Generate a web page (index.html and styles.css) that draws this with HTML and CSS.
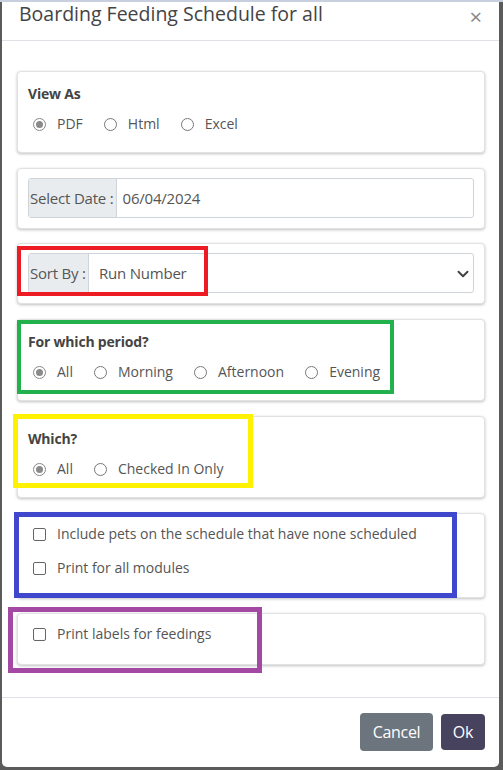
FILE: index.html
```html
<!DOCTYPE html>
<html>
<head>
<meta charset="utf-8">
<link rel="stylesheet" href="styles.css">
</head>
<body>
<div class="topband"></div>
<div class="modal">
  <div class="modal-header">
    <h5 class="title">Boarding Feeding Schedule for all</h5>
    <span class="close">&times;</span>
  </div>
  <div class="modal-body">
    <div class="card card-radio">
      <div class="group-label">View As</div>
      <div class="radio-row">
        <label class="opt"><span class="radio checked"></span>PDF</label>
        <label class="opt"><span class="radio"></span>Html</label>
        <label class="opt"><span class="radio"></span>Excel</label>
      </div>
    </div>
    <div class="card card-input">
      <div class="input-group">
        <span class="addon">Select Date :</span>
        <span class="field">06/04/2024</span>
      </div>
    </div>
    <div class="card card-input card-sort">
      <div class="input-group">
        <span class="addon">Sort By :</span>
        <span class="field select">Run Number
          <svg class="chev" width="12" height="8" viewBox="0 0 12 8"><path d="M1.5 1.8 L6 6.2 L10.5 1.8" fill="none" stroke="#444" stroke-width="2" stroke-linecap="round" stroke-linejoin="round"/></svg>
        </span>
      </div>
    </div>
    <div class="card card-radio">
      <div class="group-label">For which period?</div>
      <div class="radio-row">
        <label class="opt"><span class="radio checked"></span>All</label>
        <label class="opt"><span class="radio"></span>Morning</label>
        <label class="opt"><span class="radio"></span>Afternoon</label>
        <label class="opt"><span class="radio"></span>Evening</label>
      </div>
    </div>
    <div class="card card-radio">
      <div class="group-label">Which?</div>
      <div class="radio-row">
        <label class="opt"><span class="radio checked"></span>All</label>
        <label class="opt"><span class="radio"></span>Checked In Only</label>
      </div>
    </div>
    <div class="card card-checks">
      <label class="chk"><span class="box"></span>Include pets on the schedule that have none scheduled</label>
      <label class="chk"><span class="box"></span>Print for all modules</label>
    </div>
    <div class="card card-check1">
      <label class="chk"><span class="box"></span>Print labels for feedings</label>
    </div>
  </div>
  <div class="modal-footer">
    <button class="btn btn-cancel">Cancel</button>
    <button class="btn btn-ok">Ok</button>
  </div>

  <div class="mark mark-red"></div>
  <div class="mark mark-green"></div>
  <div class="mark mark-yellow"></div>
  <div class="mark mark-blue"></div>
  <div class="mark mark-purple"></div>
</div>
</body>
</html>
```

FILE: styles.css
```css
html, body {
  margin: 0;
  padding: 0;
}
body {
  background: #5b5b5b;
  width: 503px;
  height: 770px;
  overflow: hidden;
  font-family: "Open Sans", "Noto Sans", sans-serif;
  color: #555;
}
.topband {
  height: 2px;
  background: #c8d0df;
}
.modal {
  position: relative;
  margin-left: 2px;
  width: 497px;
  height: 765px;
  background: #fff;
  border-radius: 0 0 5px 5px;
  box-sizing: border-box;
}
.modal-header {
  height: 39px;
  box-sizing: border-box;
  border-bottom: 1px solid #dee2e6;
  display: flex;
  justify-content: space-between;
  align-items: flex-start;
  padding: 0 17px 0 17px;
}
.title {
  margin: 0;
  font-size: 19.5px;
  font-weight: 400;
  line-height: 23px;
  color: #444;
}
.close {
  font-size: 22px;
  line-height: 22px;
  color: #888;
  font-weight: 400;
  padding-top: 3px;
}
.modal-body {
  padding: 30px 14px 0 15px;
  display: flex;
  flex-direction: column;
  gap: 15px;
  height: 656px;
  box-sizing: border-box;
}
.card {
  border: 1px solid #e2e2e2;
  border-radius: 4px;
  box-shadow: 0 1px 3px rgba(0,0,0,0.25);
  background: #fff;
  box-sizing: border-box;
}
.card-sort {
  margin-top: -1px;
}
.card-radio {
  padding: 12px 10px 18px 10px;
}
.group-label {
  font-size: 14px;
  font-weight: 700;
  line-height: 20px;
  color: #444;
  letter-spacing: -0.2px;
}
.radio-row {
  display: flex;
  gap: 21px;
  margin-top: 10px;
  padding-left: 5px;
}
.opt, .chk {
  display: flex;
  align-items: center;
  font-size: 14px;
  line-height: 20px;
  color: #555;
}
.radio {
  width: 13px;
  height: 13px;
  border: 1px solid #777;
  border-radius: 50%;
  box-sizing: border-box;
  margin-right: 11px;
  position: relative;
  flex: none;
}
.radio.checked {
  border-color: #888;
}
.radio.checked::after {
  content: "";
  position: absolute;
  left: 2px;
  top: 2px;
  width: 7px;
  height: 7px;
  border-radius: 50%;
  background: #8a8a8a;
}
.card-input {
  padding: 9px 10px 10px 10px;
}
.input-group {
  display: flex;
  height: 40px;
  border: 1px solid #ced4da;
  border-radius: 3px;
  box-sizing: border-box;
  font-size: 15px;
  color: #555;
  letter-spacing: -0.2px;
}
.addon {
  display: flex;
  align-items: center;
  background: #e9ecef;
  border-right: 1px solid #ced4da;
  padding: 0 2px 0 1px;
}
.field {
  flex: 1;
  display: flex;
  align-items: center;
  padding-left: 6px;
}
.field.select {
  padding-left: 10px;
  justify-content: space-between;
  padding-right: 4px;
}
.chev {
  margin-top: 1px;
}
.card-checks {
  padding: 10px 10px 19px 15px;
  display: flex;
  flex-direction: column;
  gap: 14px;
}
.card-check1 {
  padding: 10px 10px 20px 15px;
}
.box {
  width: 13px;
  height: 13px;
  border: 1px solid #666;
  border-radius: 2px;
  box-sizing: border-box;
  margin-right: 11px;
  flex: none;
}
.modal-footer {
  border-top: 1px solid #dee2e6;
  display: flex;
  justify-content: flex-end;
  align-items: center;
  gap: 8px;
  padding: 15px 14px 0 0;
}
.btn {
  border: none;
  border-radius: 4px;
  color: #fff;
  font-family: "Open Sans", "Noto Sans", sans-serif;
  font-size: 16px;
  letter-spacing: -0.3px;
  height: 36px;
  padding: 0 12px;
}
.btn-cancel {
  background: #6c757d;
  height: 38px;
  width: 73px;
}
.btn-ok {
  background: #47425d;
  width: 44px;
  padding: 0;
}
.mark {
  position: absolute;
  border: 5px solid;
  box-sizing: border-box;
}
.mark-red { border-color: #ed1c24; left: 15px; top: 244px; width: 191px; height: 50px; border-width: 4px; }
.mark-green { border-color: #22b14c; left: 15px; top: 318px; width: 377px; height: 74px; border-width: 4px; }
.mark-yellow { border-color: #fff200; left: 11px; top: 412px; width: 240px; height: 74px; }
.mark-blue { border-color: #3f48cc; left: 12px; top: 510px; width: 443px; height: 86px; }
.mark-purple { border-color: #a349a4; left: 6px; top: 605px; width: 254px; height: 66px; }
```
